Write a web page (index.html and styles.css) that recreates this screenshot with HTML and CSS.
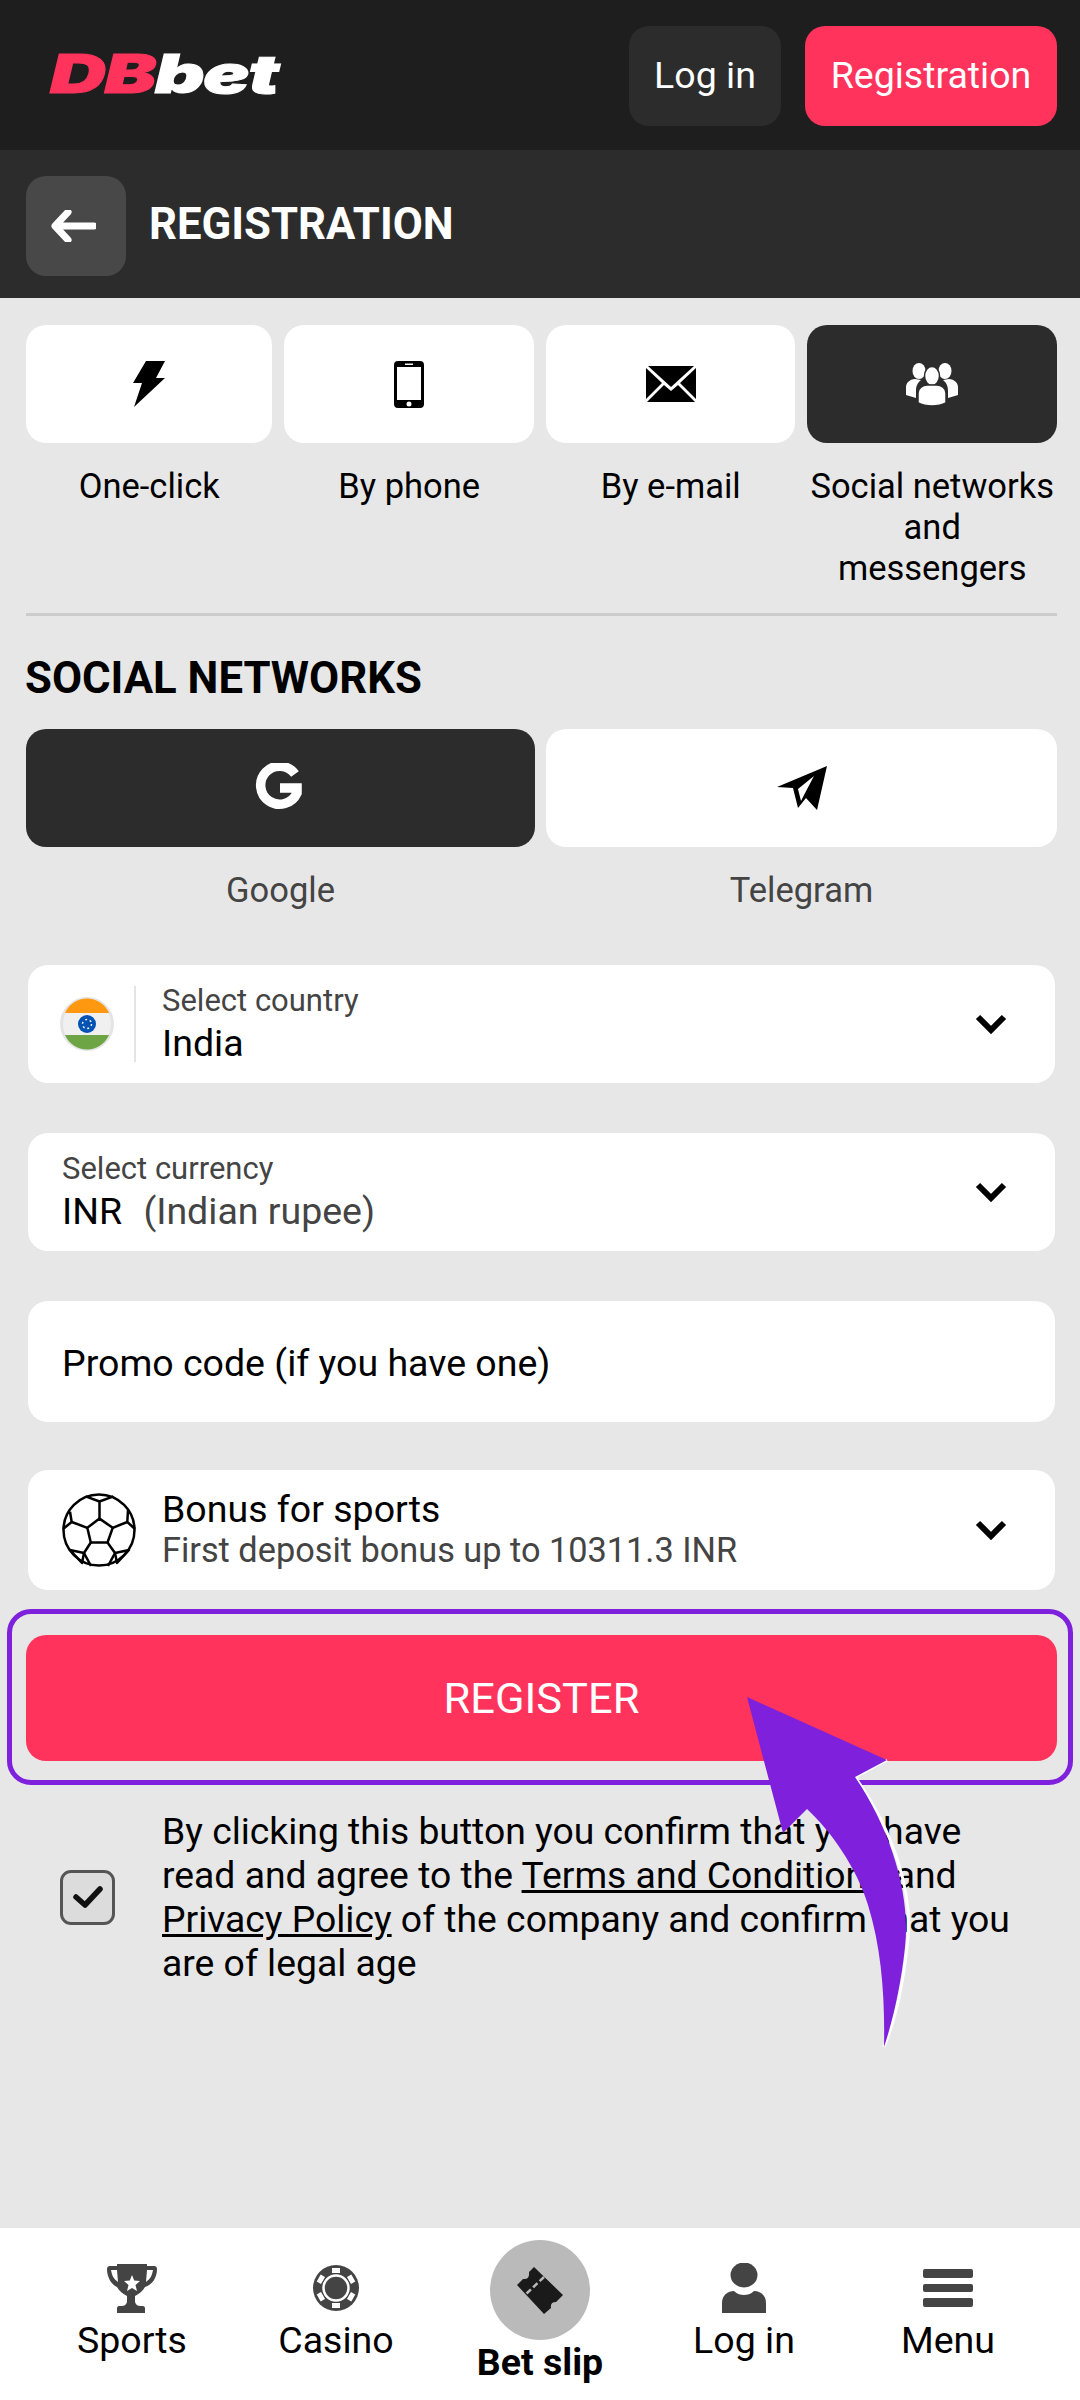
FILE: index.html
```html
<!DOCTYPE html>
<html lang="en">

<head>
    <meta charset="UTF-8">
    <meta name="viewport" content="width=device-width, initial-scale=1.0">
    <title>DBbet registration</title>
    <link rel="stylesheet" href="styles.css">
</head>

<body>
    <div id="page">
        <header class="topbar">
            <div class="logo"><span class="logo-db">DB</span><span class="logo-bet">bet</span></div>
            <div class="top-actions">
                <div class="btn-login">Log in</div>
                <div class="btn-reg">Registration</div>
            </div>
        </header>

        <div class="subbar">
            <div class="back">
                <svg width="46" height="32" viewBox="0 0 46 32">
                    <path d="M18 2 5 16l13 14M6 16h38" fill="none" stroke="#fff" stroke-width="7" stroke-linejoin="round" stroke-linecap="round" />
                </svg>
            </div>
            <h1 class="subtitle">REGISTRATION</h1>
        </div>

        <main class="content">
            <div class="tabs">
                <div class="tab">
                    <div class="tile">
                        <svg width="32" height="46" viewBox="0 0 32 46">
                            <path d="M13 0h19l-9 17h9L1 46l8-24H0z" />
                        </svg>
                    </div>
                    <div class="tab-label">One-click</div>
                </div>
                <div class="tab">
                    <div class="tile">
                        <svg width="30" height="47" viewBox="0 0 30 47">
                            <path fill-rule="evenodd" d="M4 0h22a4 4 0 0 1 4 4v39a4 4 0 0 1-4 4H4a4 4 0 0 1-4-4V4a4 4 0 0 1 4-4zM3 6v33h24V6zm8-3.500v1.500h8V2.500zM15 40.500a2.500 2.500 0 1 0 0 5 2.500 2.500 0 0 0 0-5z" />
                        </svg>
                    </div>
                    <div class="tab-label">By phone</div>
                </div>
                <div class="tab">
                    <div class="tile">
                        <svg width="50" height="36" viewBox="0 0 50 36">
                            <path d="M2 0h46L25 21zM0 2l16 15L0 33zM50 2v31L34 17zM18 19l7 6 7-6 17 17H1z" />
                        </svg>
                    </div>
                    <div class="tab-label">By e-mail</div>
                </div>
                <div class="tab">
                    <div class="tile tile-dark">
                        <svg width="52" height="44" viewBox="0 0 52 44" fill="#fff">
                            <ellipse cx="13" cy="9" rx="6.500" ry="8" />
                            <ellipse cx="39" cy="9" rx="6.500" ry="8" />
                            <path d="M0 33V25c0-5 5-8 9-8l6 1c-4 3-5 7-5 11v7zM52 33V25c0-5-5-8-9-8l-6 1c4 3 5 7 5 11v7z" />
                            <ellipse cx="26" cy="14" rx="7.500" ry="9.500" stroke="#2c2c2c" stroke-width="1.500" />
                            <path d="M12 41V31c0-5 5-8 9-8h10c4 0 9 3 9 8v10c-8 4-20 4-28 0z" stroke="#2c2c2c" stroke-width="1.500" />
                        </svg>
                    </div>
                    <div class="tab-label">Social networks and messengers</div>
                </div>
            </div>

            <div class="divider"></div>

            <h2 class="section-title">SOCIAL NETWORKS</h2>

            <div class="socials">
                <div class="social">
                    <div class="tile tile-dark">
                        <svg class="icon-g" width="48" height="50" viewBox="0 0 48 50">
                            <path d="M40 11A19 19 0 1 0 42 30V25H25" fill="none" stroke="#fff" stroke-width="9.500" />
                        </svg>
                    </div>
                    <div class="social-label">Google</div>
                </div>
                <div class="social">
                    <div class="tile">
                        <svg width="50" height="44" viewBox="0 0 50 44">
                            <path fill-rule="evenodd" d="M50 0 40 44 29 32l-8 10-5-20L0 21zM37 10 21 23l3 12 3-6z" />
                        </svg>
                    </div>
                    <div class="social-label">Telegram</div>
                </div>
            </div>

            <div class="field field-country">
                <svg class="flag" width="54" height="54" viewBox="0 0 54 54">
                    <circle cx="27" cy="27" r="27" fill="#e4e4e4" />
                    <circle cx="27" cy="27" r="24" fill="#f0f0f0" />
                    <path d="M5 16a24 24 0 0 1 44 0z" fill="#ff9811" />
                    <path d="M5 38a24 24 0 0 0 44 0z" fill="#6da544" />
                    <circle cx="27" cy="27" r="9" fill="#0052b4" />
                    <circle cx="27" cy="27" r="4.500" fill="none" stroke="#f0f0f0" stroke-width="1.500" stroke-dasharray="2 2.700" />
                </svg>
                <div class="field-rule"></div>
                <div class="field-text">
                    <div class="field-hint">Select country</div>
                    <div class="field-value">India</div>
                </div>
                <svg class="chevron" width="34" height="22" viewBox="0 0 34 22">
                    <path d="M4 4l13 13L30 4" />
                </svg>
            </div>

            <div class="field">
                <div class="field-text">
                    <div class="field-hint">Select currency</div>
                    <div class="field-value">INR <span class="muted">(Indian rupee)</span></div>
                </div>
                <svg class="chevron" width="34" height="22" viewBox="0 0 34 22">
                    <path d="M4 4l13 13L30 4" />
                </svg>
            </div>

            <div class="field field-promo">
                <div class="field-value">Promo code (if you have one)</div>
            </div>

            <div class="field field-bonus">
                <svg class="ball" width="74" height="74" viewBox="0 0 74 74" fill="none" stroke="#000" stroke-width="2.500" stroke-linejoin="round">
                    <circle cx="37" cy="37" r="35.500" />
                    <path d="M37.500 25.600 50.700 34.800 45.500 49.500H28.800L25.300 34.800z" />
                    <path d="M37.500 25.600V8.500M23.600 3.400 37.500 8.500 51.400 3.400" />
                    <path d="M50.700 34.800 65.300 29 66 17M65.300 29 73 36" />
                    <path d="M25.300 34.800 9.700 29 8 18.800M9.700 29 1 36" />
                    <path d="M45.500 49.500 53 60 46 73M28.800 49.500 22 60 29 73" />
                    <path d="M53 60 67 57 55 70zM22 60 8 57 20 70z" />
                </svg>
                <div class="field-text">
                    <div class="field-value">Bonus for sports</div>
                    <div class="field-sub">First deposit bonus up to 10311.3 INR</div>
                </div>
                <svg class="chevron" width="34" height="22" viewBox="0 0 34 22">
                    <path d="M4 4l13 13L30 4" />
                </svg>
            </div>

            <div class="register-frame">
                <div class="btn-register">REGISTER</div>
            </div>

            <div class="terms">
                <div class="checkbox">
                    <svg width="32" height="24" viewBox="0 0 32 24">
                        <path d="M4 12l9 8L28 4" fill="none" stroke="#111" stroke-width="5.500" stroke-linecap="round" stroke-linejoin="round" />
                    </svg>
                </div>
                <p class="terms-text">By clicking this button you confirm that you have read and agree to the <u>Terms and Conditions</u> and <u>Privacy Policy</u> of the company and confirm that you are of legal age</p>
            </div>
        </main>

        <nav class="bottom-nav">
            <div class="nav-item">
                <div class="nav-icon">
                    <svg width="50" height="51" viewBox="0 0 50 51" fill="#444">
                        <path fill-rule="evenodd" d="M10 1h30v2h7c2 0 3 1 3 3 0 9-5 16-12 18-2 4-6 7-10 9v6c1 3 3 4 5 4h3c1 0 2 1 2 2v5H10v-5c0-1 1-2 2-2h3c2 0 4-1 5-4v-6c-4-2-8-5-10-9C5 22 0 15 0 6c0-2 1-3 3-3h7zM10 7H4c1 6 3 9 7 12zM40 7h6c-1 6-3 9-7 12z" />
                        <path d="M25 12l2.200 5.500 5.800.5-4.500 4 1.500 6-5-3-5 3 1.500-6-4.500-4 5.800-.5z" fill="#fff" />
                    </svg>
                </div>
                <div class="nav-label">Sports</div>
            </div>
            <div class="nav-item">
                <div class="nav-icon">
                    <svg width="46" height="46" viewBox="0 0 46 46">
                        <circle cx="23" cy="23" r="23" fill="#444" />
                        <circle cx="23" cy="23" r="12.500" fill="#444" stroke="#fff" stroke-width="2.500" />
                        <g fill="#fff">
                            <rect x="19" y="3" width="8" height="5" />
                            <rect x="19" y="3" width="8" height="5" transform="rotate(60 23 23)" />
                            <rect x="19" y="3" width="8" height="5" transform="rotate(120 23 23)" />
                            <rect x="19" y="3" width="8" height="5" transform="rotate(180 23 23)" />
                            <rect x="19" y="3" width="8" height="5" transform="rotate(240 23 23)" />
                            <rect x="19" y="3" width="8" height="5" transform="rotate(300 23 23)" />
                        </g>
                    </svg>
                </div>
                <div class="nav-label">Casino</div>
            </div>
            <div class="nav-item nav-item-active">
                <div class="nav-circle">
                    <svg width="47" height="47" viewBox="0 0 47 47">
                        <path d="M17 0 46 28 39 35Q33 35 34 41L27 47 0 18 6 12Q13 13 12 5z" fill="#1a1a1a" />
                        <path d="M27 10 8 28" stroke="#bababa" stroke-width="2.500" stroke-dasharray="6 3" />
                    </svg>
                </div>
                <div class="nav-label">Bet slip</div>
            </div>
            <div class="nav-item">
                <div class="nav-icon">
                    <svg width="44" height="50" viewBox="0 0 44 50" fill="#444">
                        <ellipse cx="22" cy="12" rx="13.500" ry="12.500" />
                        <path d="M0 50V40c0-8 6-12 12-12 3 3 7 4 10 4s7-1 10-4c6 0 12 4 12 12v10z" />
                    </svg>
                </div>
                <div class="nav-label">Log in</div>
            </div>
            <div class="nav-item">
                <div class="nav-icon">
                    <svg width="50" height="38" viewBox="0 0 50 38" fill="#444">
                        <rect width="50" height="9" rx="2" />
                        <rect y="15" width="50" height="8" rx="2" />
                        <rect y="29" width="50" height="9" rx="2" />
                    </svg>
                </div>
                <div class="nav-label">Menu</div>
            </div>
        </nav>

        <!-- annotation arrow on top of the form -->
        <svg class="arrow" width="180" height="370" viewBox="740 1690 180 370">
            <path d="M887 1760 855 1777C893 1830 915 1895 907 1947 903 1985 895 2020 884 2047" fill="none" stroke="#fff" stroke-width="3" />
            <path d="M747 1697 887 1760 855 1777C891 1830 911 1895 905 1947 901 1985 893 2020 884 2047 885 2000 882 1950 868 1905 857 1868 830 1830 807 1809L783 1833z" fill="#7e20dc" />
        </svg>
    </div>
</body>

</html>
```

FILE: styles.css
```css
/* reset start */
* {
    padding: 0;
    margin: 0;
    box-sizing: border-box;
}

html,
body {
    width: 100%;
    height: 100%;
}

body {
    overflow: hidden;
    font-family: Roboto, "Liberation Sans", sans-serif;
    color: #000;
    background-color: #e7e7e7;
}

/* reset end */
#page {
    width: 1080px;
    height: 2400px;
    position: relative;
    display: flex;
    flex-direction: column;
}

.topbar {
    height: 150px;
    padding: 26px 23px 24px 50px;
    background-color: #1e1e1e;
    display: flex;
    align-items: center;
    justify-content: space-between;
}

.logo {
    margin-bottom: 3px;
    font-family: Inter, Roboto, sans-serif;
    font-size: 53px;
    font-weight: 900;
    font-style: italic;
    letter-spacing: -1px;
    line-height: 1;
    -webkit-text-stroke: 1px currentColor;
    transform: scaleX(1.46);
    transform-origin: left center;
}

.logo-db {
    color: #ff335c;
}

.logo-bet {
    color: #fff;
}

.top-actions {
    display: flex;
    gap: 24px;
}

.btn-login,
.btn-reg {
    height: 100px;
    padding-bottom: 3px;
    border-radius: 20px;
    color: #fff;
    font-size: 37.500px;
    display: flex;
    align-items: center;
    justify-content: center;
}

.btn-login {
    width: 152px;
    background-color: #2c2c2c;
}

.btn-reg {
    width: 252px;
    background-color: #ff335c;
}

.subbar {
    height: 148px;
    padding: 0 26px;
    background-color: #2c2c2c;
    display: flex;
    align-items: center;
    gap: 23px;
}

.back {
    width: 100px;
    height: 100px;
    margin-top: 3px;
    padding-right: 6px;
    border-radius: 20px;
    background-color: #484848;
    display: flex;
    align-items: center;
    justify-content: center;
}

.subtitle {
    font-size: 43.700px;
    font-weight: 700;
    color: #fff;
}

.content {
    flex: 1;
    padding: 27px 23px 0 26px;
}

.tabs {
    display: grid;
    grid-template-columns: 246fr 249fr 249fr 249fr;
    gap: 12px;
}

.tile {
    height: 118px;
    border-radius: 20px;
    background-color: #fff;
    display: flex;
    align-items: center;
    justify-content: center;
}

.tile-dark {
    background-color: #2c2c2c;
}

.tab-label {
    margin-top: 23px;
    font-size: 34.500px;
    line-height: 41px;
    text-align: center;
}

.divider {
    height: 3px;
    margin-top: 24px;
    background-color: #ccc;
}

.section-title {
    margin-top: 37px;
    margin-left: -1px;
    font-size: 43.700px;
    line-height: 50px;
    font-weight: 700;
}

.socials {
    margin-top: 26px;
    display: grid;
    grid-template-columns: 509fr 511fr;
    gap: 11px;
}

.icon-g {
    margin-right: 4px;
}

.social-label {
    margin-top: 23px;
    font-size: 34.500px;
    line-height: 41px;
    text-align: center;
    color: #444;
}

.field {
    height: 118px;
    margin: 50px 2px 0;
    padding: 0 30px 0 34px;
    border-radius: 20px;
    background-color: #fff;
    display: flex;
    align-items: center;
}

.socials + .field {
    margin-top: 54px;
}

.field-country {
    padding-left: 32px;
}

.field-promo {
    height: 121px;
    padding-top: 2px;
}

.field-bonus {
    height: 120px;
    margin-top: 48px;
}

.flag {
    flex-shrink: 0;
}

.field-rule {
    width: 2px;
    height: 76px;
    margin: 0 26px 0 20px;
    background-color: #e4e4e4;
}

.field-text {
    flex: 1;
    padding-bottom: 2px;
}

.field-hint {
    font-size: 31px;
    line-height: 40px;
    color: #444;
}

.field-value {
    font-size: 37.500px;
    line-height: 44px;
}

.field-bonus .field-value {
    line-height: 42px;
}

.muted {
    margin-left: 12px;
    color: #444;
}

.field-sub {
    font-size: 34.300px;
    line-height: 40px;
    color: #444;
}

.chevron {
    fill: none;
    stroke: #000;
    stroke-width: 6;
    margin-right: 17px;
}

.ball {
    margin: 0 26px 0 0;
    flex-shrink: 0;
}

.register-frame {
    height: 176px;
    margin: 19px -16px 0 -19px;
    padding: 21px 11px 19px 14px;
    border: 5px solid #7e20dc;
    border-radius: 24px;
}

.btn-register {
    height: 126px;
    border-radius: 20px;
    background-color: #ff335c;
    color: #fff;
    font-size: 43.400px;
    display: flex;
    align-items: center;
    justify-content: center;
}

.terms {
    margin-top: 24px;
    padding: 0 40px 0 34px;
    display: flex;
    align-items: center;
}

.checkbox {
    width: 55px;
    height: 55px;
    margin-right: 47px;
    flex-shrink: 0;
    border: 3px solid #555;
    border-radius: 11px;
    background-color: #dcdcdc;
    display: flex;
    align-items: center;
    justify-content: center;
}

.terms-text {
    font-size: 37.300px;
    line-height: 44px;
}

.bottom-nav {
    height: 172px;
    padding: 12px 30px 0;
    background-color: #fff;
    display: grid;
    grid-template-columns: repeat(5, 1fr);
}

.nav-item {
    padding-top: 22px;
    display: flex;
    flex-direction: column;
    align-items: center;
}

.nav-icon {
    height: 52px;
    display: flex;
    align-items: center;
    justify-content: center;
}

.nav-label {
    margin-top: 4px;
    font-size: 37.500px;
    line-height: 44px;
}

.nav-item-active {
    padding-top: 0;
}

.nav-item-active .nav-label {
    margin-top: 0;
    font-weight: 700;
}

.nav-circle {
    width: 100px;
    height: 100px;
    border-radius: 50%;
    background-color: #bababa;
    display: flex;
    align-items: center;
    justify-content: center;
}

.arrow {
    position: absolute;
    left: 740px;
    top: 1690px;
}
```
